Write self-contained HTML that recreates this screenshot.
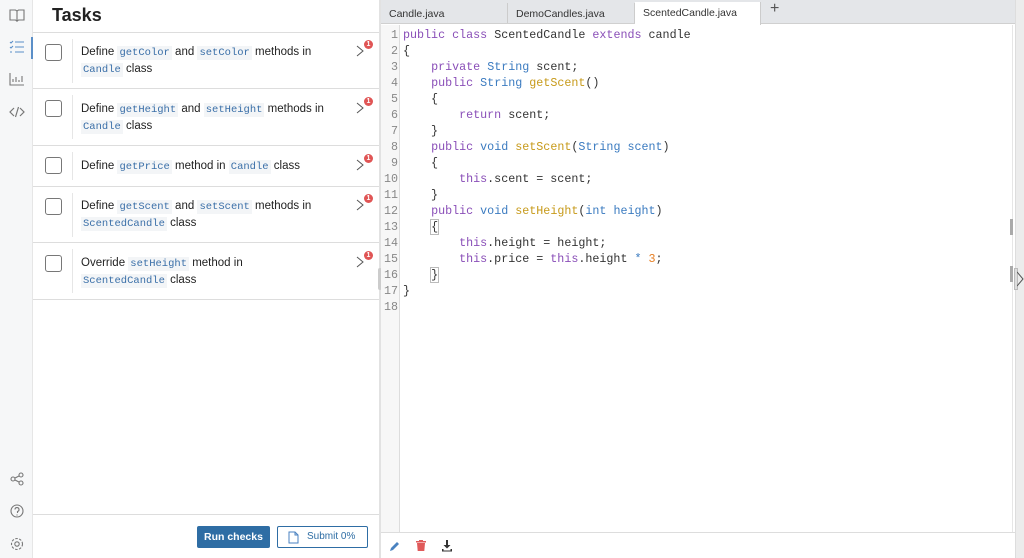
<!DOCTYPE html>
<html><head><meta charset="utf-8"><style>
*{box-sizing:border-box;margin:0;padding:0}
body{width:1024px;height:558px;overflow:hidden;background:#fff;font-family:"Liberation Sans",sans-serif;color:#222;position:relative}
.abs{position:absolute}
.side{left:0;top:0;width:33px;height:558px;background:#f6f7f8;border-right:1px solid #e6e6e6}
.ico{position:absolute;left:9px;width:16px;height:16px}
.row{position:absolute;left:33px;width:346px;border-bottom:1px solid #ddd}
.cb{position:absolute;left:12px;width:17px;height:17px;border:1.5px solid #777;border-radius:3px;background:#fff}
.sep{position:absolute;left:39px;width:1px;background:#e6e6e6}
.txt{position:absolute;left:48px;font-size:11.5px;line-height:16px;width:250px;color:#222}
code{font-family:"Liberation Mono",monospace;font-size:10.5px;color:#3a6fa8;background:#f3f5f7;padding:1px 2px}
.chev{position:absolute;left:323px}
.badge{position:absolute;left:331px;width:9px;height:9px;border-radius:50%;background:#e05555;color:#fff;font-size:7px;line-height:9px;text-align:center;font-weight:bold}
.tab{position:absolute;top:3px;height:20px;font-size:10.5px;color:#333;padding:5px 0 0 8px;border-right:1px solid #ccc}
.code{left:403px;top:27px;font-family:"Liberation Mono",monospace;font-size:11.7px;line-height:16px;white-space:pre;color:#333}
.ln{left:380px;top:27px;width:18px;text-align:right;font-family:"Liberation Mono",monospace;font-size:11.7px;line-height:16px;color:#888;white-space:pre}
.k{color:#8a4fb8}.t{color:#3b7bc0}.f{color:#c79a1a}.n{color:#e67e22}
</style></head><body>
<div class="abs side"></div>
<svg class="ico" style="top:7px" viewBox="0 0 16 16" fill="none" stroke="#777" stroke-width="1.1"><path d="M1 3h5.5l1.5 1v10l-1.5-1H1zM15 3H9.5L8 4v10l1.5-1H15z"/></svg>
<svg class="ico" style="top:39px" viewBox="0 0 16 16" fill="none" stroke="#5b8fc8" stroke-width="1.1"><path d="M6 3h9M6 8h9M6 13h9M1 3l1 1 2-2M1 8l1 1 2-2M1 13h2"/></svg>
<div class="abs" style="left:31px;top:37px;width:2px;height:22px;background:#5b8fc8"></div>
<svg class="ico" style="top:71px" viewBox="0 0 16 16" fill="none" stroke="#777" stroke-width="1.1"><path d="M1 2v12h14M4 11V8M7 11V6M10 11V9M13 11V5"/></svg>
<svg class="ico" style="top:104px" viewBox="0 0 16 16" fill="none" stroke="#777" stroke-width="1.2"><path d="M5 4L1 8l4 4M11 4l4 4-4 4M9.5 3l-3 10"/></svg>
<svg class="ico" style="top:471px" viewBox="0 0 16 16" fill="none" stroke="#777" stroke-width="1.1"><circle cx="4" cy="8" r="2"/><circle cx="12" cy="4" r="2"/><circle cx="12" cy="12" r="2"/><path d="M6 7l4-2M6 9l4 2"/></svg>
<svg class="ico" style="top:503px" viewBox="0 0 16 16" fill="none" stroke="#777" stroke-width="1.1"><circle cx="8" cy="8" r="6"/><path d="M6 6.5a2 2 0 1 1 2.5 2V10M8 11.5v1"/></svg>
<svg class="ico" style="top:536px" viewBox="0 0 16 16" fill="none" stroke="#777" stroke-width="1.1"><circle cx="8" cy="8" r="2.2"/><circle cx="8" cy="8" r="5.5" stroke-dasharray="2.5 1.5"/></svg>

<div class="abs" style="left:52px;top:5px;font-size:18px;font-weight:bold;color:#222">Tasks</div>
<div class="abs" style="left:33px;top:32px;width:347px;height:1px;background:#ddd"></div>

<div class="row" style="top:33px;height:56px"><div class="cb" style="top:11px"></div><div class="sep" style="top:6px;height:44px"></div><div class="txt" style="top:11px">Define <code>getColor</code> and <code>setColor</code> methods in <code>Candle</code> class</div><svg class="chev" style="top:12px" width="8" height="12" viewBox="0 0 8 12" fill="none" stroke="#555" stroke-width="1"><path d="M1 1l6 5-6 5"/></svg><div class="badge" style="top:7px">1</div></div>
<div class="row" style="top:89px;height:57px"><div class="cb" style="top:11px"></div><div class="sep" style="top:6px;height:44px"></div><div class="txt" style="top:12px">Define <code>getHeight</code> and <code>setHeight</code> methods in <code>Candle</code> class</div><svg class="chev" style="top:13px" width="8" height="12" viewBox="0 0 8 12" fill="none" stroke="#555" stroke-width="1"><path d="M1 1l6 5-6 5"/></svg><div class="badge" style="top:8px">1</div></div>
<div class="row" style="top:146px;height:41px"><div class="cb" style="top:11px"></div><div class="sep" style="top:6px;height:28px"></div><div class="txt" style="top:12px">Define <code>getPrice</code> method in <code>Candle</code> class</div><svg class="chev" style="top:13px" width="8" height="12" viewBox="0 0 8 12" fill="none" stroke="#555" stroke-width="1"><path d="M1 1l6 5-6 5"/></svg><div class="badge" style="top:8px">1</div></div>
<div class="row" style="top:187px;height:56px"><div class="cb" style="top:11px"></div><div class="sep" style="top:6px;height:44px"></div><div class="txt" style="top:11px">Define <code>getScent</code> and <code>setScent</code> methods in <code>ScentedCandle</code> class</div><svg class="chev" style="top:12px" width="8" height="12" viewBox="0 0 8 12" fill="none" stroke="#555" stroke-width="1"><path d="M1 1l6 5-6 5"/></svg><div class="badge" style="top:7px">1</div></div>
<div class="row" style="top:243px;height:57px"><div class="cb" style="top:12px"></div><div class="sep" style="top:6px;height:44px"></div><div class="txt" style="top:12px">Override <code>setHeight</code> method in<br><code>ScentedCandle</code> class</div><svg class="chev" style="top:13px" width="8" height="12" viewBox="0 0 8 12" fill="none" stroke="#555" stroke-width="1"><path d="M1 1l6 5-6 5"/></svg><div class="badge" style="top:8px">1</div></div>

<div class="abs" style="left:33px;top:514px;width:347px;height:1px;background:#ddd"></div>
<div class="abs" style="left:197px;top:526px;width:73px;height:22px;background:#2e6da4;border-radius:2px;color:#fff;font-size:10.5px;font-weight:bold;text-align:center;line-height:22px">Run checks</div>
<div class="abs" style="left:277px;top:526px;width:91px;height:22px;border:1.5px solid #2e6da4;border-radius:2px;color:#2e6da4;font-size:10px;line-height:19px;padding-left:29px">Submit 0%</div>
<svg class="abs" style="left:288px;top:531px" width="11" height="13" viewBox="0 0 11 13" fill="none" stroke="#4a82c0" stroke-width="1"><path d="M1 1h6l3 3v8H1zM7 1v3h3"/></svg>

<div class="abs" style="left:379px;top:0;width:2px;height:558px;background:#e2e2e2"></div>
<div class="abs" style="left:378px;top:268px;width:4px;height:22px;background:#ccc;border-radius:2px"></div>

<div class="abs" style="left:381px;top:0;width:634px;height:24px;background:#e4e6e9;border-bottom:1px solid #d0d0d0"></div>
<div class="tab" style="left:381px;width:127px">Candle.java</div>
<div class="tab" style="left:508px;width:127px">DemoCandles.java</div>
<div class="tab" style="left:635px;width:126px;top:2px;height:23px;background:#fff;border:none;border-right:1px solid #ccc">ScentedCandle.java</div>
<div class="abs" style="left:770px;top:0;font-size:16px;color:#555">+</div>

<div class="abs" style="left:381px;top:25px;width:19px;height:507px;background:#f7f7f7;border-right:1px solid #ddd"></div>
<div class="abs ln">1
2
3
4
5
6
7
8
9
10
11
12
13
14
15
16
17
18</div>
<div class="abs code"><span class="k">public</span> <span class="k">class</span> ScentedCandle <span class="k">extends</span> candle
{
    <span class="k">private</span> <span class="t">String</span> scent;
    <span class="k">public</span> <span class="t">String</span> <span class="f">getScent</span>()
    {
        <span class="k">return</span> scent;
    }
    <span class="k">public</span> <span class="t">void</span> <span class="f">setScent</span>(<span class="t">String scent</span>)
    {
        <span class="k">this</span>.scent = scent;
    }
    <span class="k">public</span> <span class="t">void</span> <span class="f">setHeight</span>(<span class="t">int height</span>)
    <span style="outline:1px solid #bbb">{</span>
        <span class="k">this</span>.height = height;
        <span class="k">this</span>.price = <span class="k">this</span>.height <span class="t">*</span> <span class="n">3</span>;
    <span style="outline:1px solid #bbb">}</span>
}
</div>

<div class="abs" style="left:1012px;top:25px;width:1px;height:507px;background:#e6e6e6"></div>
<div class="abs" style="left:1010px;top:219px;width:3px;height:16px;background:#aaa"></div>
<div class="abs" style="left:1010px;top:266px;width:3px;height:16px;background:#aaa"></div>
<div class="abs" style="left:1015px;top:0;width:9px;height:558px;background:#ececec;border-left:1px solid #ddd"></div>
<div class="abs" style="left:1014px;top:268px;width:4px;height:22px;background:#ddd;border:1px solid #bbb"></div>
<svg class="abs" style="left:1017px;top:271px" width="7" height="16" viewBox="0 0 7 16" fill="none" stroke="#555" stroke-width="1"><path d="M0 1l6 7-6 7"/></svg>

<div class="abs" style="left:381px;top:532px;width:634px;height:1px;background:#ddd"></div>
<svg class="abs" style="left:389px;top:540px" width="12" height="12" viewBox="0 0 12 12"><path d="M1 11l1-3 6-6 2 2-6 6z" fill="#4a82c0"/></svg>
<svg class="abs" style="left:415px;top:539px" width="12" height="13" viewBox="0 0 12 13"><path d="M1 2h10v1.5H1zM4 1h4v1H4zM2 4h8l-.7 8H2.7z" fill="#e05a5a"/></svg>
<svg class="abs" style="left:441px;top:539px" width="12" height="13" viewBox="0 0 12 13"><path d="M5 1h2v5h2.5L6 9.5 2.5 6H5zM1 10h1.5v1.5h7V10H11v2.5H1z" fill="#333"/></svg>
</body></html>
